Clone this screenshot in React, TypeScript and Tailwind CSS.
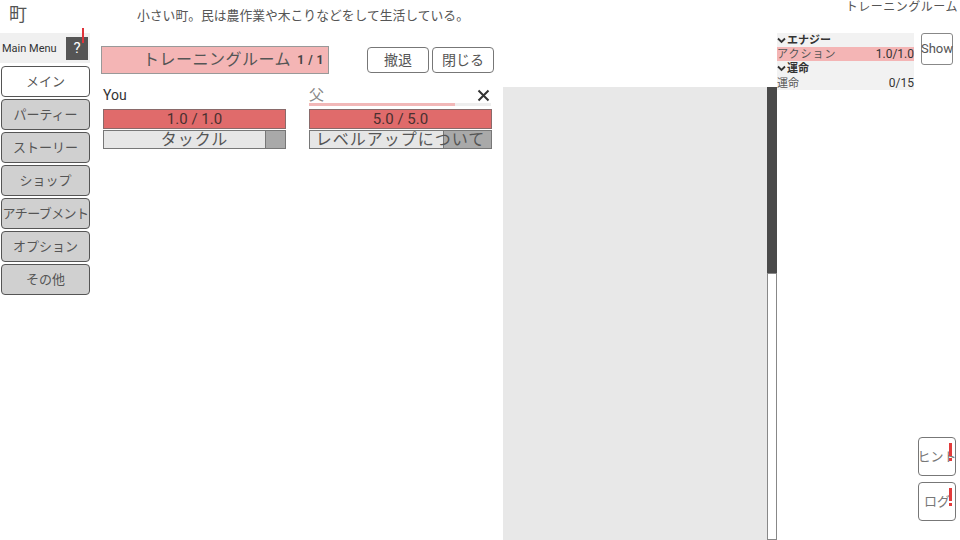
import React from 'react';

const menuItems = ['メイン', 'パーティー', 'ストーリー', 'ショップ', 'アチーブメント', 'オプション', 'その他'];

interface Fighter {
    name: string;
    hp: string;
    skill: string;
    cooldown: number;
}

const fighters: Fighter[] = [
    { name: 'You', hp: '1.0 / 1.0', skill: 'タックル', cooldown: 20 },
    { name: '父', hp: '5.0 / 5.0', skill: 'レベルアップについて', cooldown: 48 },
];

const Chevron = () => (
    <svg width="9" height="7" viewBox="0 0 9 7" className="mr-[1px] shrink-0">
        <path d="M1 1.5 L4.5 5 L8 1.5" stroke="#333" strokeWidth="1.8" fill="none" />
    </svg>
);

const FighterCard: React.FC<{ f: Fighter; enemy?: boolean }> = ({ f, enemy }) => (
    <div className="w-[183px] flex flex-col">
        <div className="relative h-[21px] flex items-start">
            <span className={`leading-[15px] whitespace-nowrap ${enemy ? 'text-[15px] text-[#888]' : 'text-[14px] text-[#333]'}`}>{f.name}</span>
            {enemy && (
                <>
                    <div className="absolute left-0 top-[15px] w-[182px] h-[3px] bg-[#eeeeee]">
                        <div className="h-full w-[146px] bg-[#f2b8b8]" />
                    </div>
                    <svg className="absolute right-[2px] top-[1px]" width="13" height="13" viewBox="0 0 13 13">
                        <path d="M1.5 1.5 L11.5 11.5 M11.5 1.5 L1.5 11.5" stroke="#333" strokeWidth="2" />
                    </svg>
                </>
            )}
        </div>
        <div className="h-[20px] bg-[#e06b6b] border border-[#8a6a6a] flex items-center justify-center text-[15px] leading-none text-[#4a3030] whitespace-nowrap">
            {f.hp}
        </div>
        <div className="relative mt-[1px] h-[19px] bg-[#e6e6e6] border border-[#777] overflow-hidden">
            <div className="absolute right-0 top-0 h-full bg-[#a9a9a9] border-l border-[#777]" style={{ width: f.cooldown }} />
            <div className="relative h-full flex items-center justify-center text-[16px] leading-none text-[#555] tracking-[1px] whitespace-nowrap">{f.skill}</div>
        </div>
    </div>
);

export default function App() {
    return (
        <div
            className="w-[960px] h-[540px] bg-white relative overflow-hidden flex flex-col"
            style={{ fontFamily: 'Roboto, "Noto Sans CJK JP", sans-serif' }}
        >
            {/* header */}
            <div className="h-[33px] flex items-start shrink-0">
                <div className="w-[137px] pl-[9px] pt-[4px] text-[18px] leading-[22px] text-[#555]">町</div>
                <div className="pt-[8px] text-[12.8px] leading-[16px] text-[#555] whitespace-nowrap">小さい町。民は農作業や木こりなどをして生活している。</div>
                <div className="ml-auto pr-[2px] text-[12px] leading-[14px] text-[#555] tracking-[0.5px] whitespace-nowrap">トレーニングルーム</div>
            </div>

            <div className="flex-1 flex min-h-0">
                {/* sidebar */}
                <div className="w-[101px] shrink-0 flex flex-col">
                    <div className="relative w-[90px] h-[30px] bg-[#f0f0f0] flex items-center justify-between pl-[2px] pr-[2px]">
                        <span className="text-[11px] text-[#333] leading-none whitespace-nowrap">Main Menu</span>
                        <div className="w-[22px] h-[23px] bg-[#555] text-white flex items-center justify-center text-[15px] leading-none">?</div>
                        <div className="absolute left-[82px] -top-[5px] w-[2px] h-[15px] bg-[#e0333a]" />
                    </div>
                    <div className="flex flex-col gap-[2px] pl-[1px] mt-[3px]">
                        {menuItems.map((m, i) => (
                            <div
                                key={m}
                                className={`w-[89px] h-[31px] rounded-[4px] border border-[#555] flex items-center justify-center text-[13px] text-[#555] leading-none whitespace-nowrap overflow-hidden ${m.length > 6 ? 'tracking-[-0.6px]' : ''} ${i === 0 ? 'bg-white' : 'bg-[#d0d0d0]'}`}
                            >
                                {m}
                            </div>
                        ))}
                    </div>
                </div>

                {/* battle area */}
                <div className="w-[402px] shrink-0 flex flex-col pt-[13px]">
                    <div className="flex items-center h-[28px]">
                        <div className="w-[228px] h-[28px] bg-[#f4b5b5] border border-[#999] flex items-center pl-[41px] pr-[4px] whitespace-nowrap">
                            <span className="text-[16px] leading-none text-[#555] tracking-[0.5px]">トレーニングルーム</span>
                            <span className="ml-auto text-[12px] font-bold text-[#444] leading-none tracking-[0.5px]">1 / 1</span>
                        </div>
                        <div className="ml-[38px] flex gap-[3px]">
                            <div className="w-[62px] h-[26px] bg-white border border-[#777] rounded-[4px] flex items-center justify-center text-[14px] text-[#555]">撤退</div>
                            <div className="w-[62px] h-[26px] bg-white border border-[#777] rounded-[4px] flex items-center justify-center text-[14px] text-[#555]">閉じる</div>
                        </div>
                    </div>
                    <div className="flex gap-[23px] pl-[2px] mt-[14px]">
                        <FighterCard f={fighters[0]} />
                        <FighterCard f={fighters[1]} enemy />
                    </div>
                </div>

                {/* log */}
                <div className="w-[274px] shrink-0 flex pt-[54px]">
                    <div className="w-[264px] h-full bg-[#e8e8e8]" />
                    <div className="w-[10px] h-full flex flex-col">
                        <div className="h-[186px] bg-[#4a4a4a]" />
                        <div className="flex-1 bg-white border border-[#888]" />
                    </div>
                </div>

                {/* status */}
                <div className="flex-1 flex flex-col pb-[19px]">
                    <div className="flex items-start">
                        <div className="w-[137px] bg-[#f2f2f2] text-[11px] leading-none whitespace-nowrap">
                            <div className="h-[14px] flex items-center font-bold text-[#333]">
                                <Chevron />エナジー
                            </div>
                            <div className="h-[14px] flex items-center justify-between bg-[#f4b5b5] text-[#555]">
                                <span className="tracking-[1px]">アクション</span>
                                <span className="text-[12px] text-[#333]">1.0/1.0</span>
                            </div>
                            <div className="h-[15px] flex items-center font-bold text-[#333]">
                                <Chevron />運命
                            </div>
                            <div className="h-[14px] flex items-center justify-between text-[#555]">
                                <span>運命</span>
                                <span className="text-[12px] text-[#333]">0/15</span>
                            </div>
                        </div>
                        <div className="ml-[7px] w-[32px] h-[32px] bg-white border border-[#888] rounded-[3px] flex items-center justify-center text-[13px] text-[#555]">Show</div>
                    </div>
                    <div className="mt-auto flex flex-col gap-[6px] pl-[141px]">
                        {['ヒント', 'ログ'].map(b => (
                            <div key={b} className="relative w-[38px] h-[39px] bg-white border border-[#777] rounded-[4px] flex items-center justify-center text-[13px] text-[#777] overflow-hidden whitespace-nowrap">
                                {b}
                                <div className="absolute right-[3px] top-[5px] w-[3px] h-[19px] flex flex-col items-center">
                                    <div className="w-[3px] h-[13px] bg-[#e23b3b]" />
                                    <div className="w-[3px] h-[3px] mt-[2px] bg-[#e23b3b]" />
                                </div>
                            </div>
                        ))}
                    </div>
                </div>
            </div>
        </div>
    );
}
